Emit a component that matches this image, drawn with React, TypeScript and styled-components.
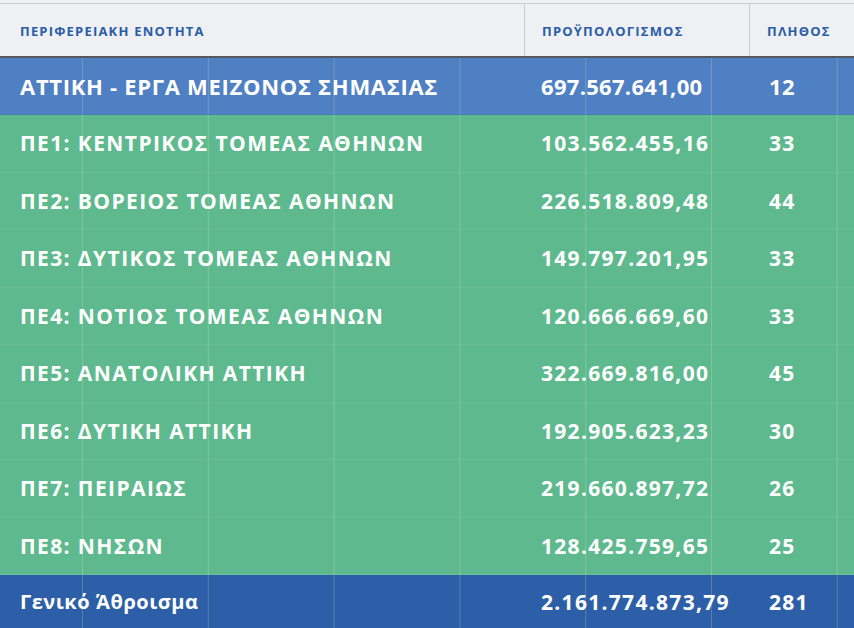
import React from "react";
import styled, { createGlobalStyle, css } from "styled-components";

const rows = [
  { name: "ΠΕ1: ΚΕΝΤΡΙΚΟΣ ΤΟΜΕΑΣ ΑΘΗΝΩΝ", budget: "103.562.455,16", count: "33" },
  { name: "ΠΕ2: ΒΟΡΕΙΟΣ ΤΟΜΕΑΣ ΑΘΗΝΩΝ", budget: "226.518.809,48", count: "44" },
  { name: "ΠΕ3: ΔΥΤΙΚΟΣ ΤΟΜΕΑΣ ΑΘΗΝΩΝ", budget: "149.797.201,95", count: "33" },
  { name: "ΠΕ4: ΝΟΤΙΟΣ ΤΟΜΕΑΣ ΑΘΗΝΩΝ", budget: "120.666.669,60", count: "33" },
  { name: "ΠΕ5: ΑΝΑΤΟΛΙΚΗ ΑΤΤΙΚΗ", budget: "322.669.816,00", count: "45" },
  { name: "ΠΕ6: ΔΥΤΙΚΗ ΑΤΤΙΚΗ", budget: "192.905.623,23", count: "30" },
  { name: "ΠΕ7: ΠΕΙΡΑΙΩΣ", budget: "219.660.897,72", count: "26" },
  { name: "ΠΕ8: ΝΗΣΩΝ", budget: "128.425.759,65", count: "25" },
];

const App = () => {
  return (
    <>
      <GlobalStyle />
      <Table>
        <HeaderRow>
          <HeadCell>ΠΕΡΙΦΕΡΕΙΑΚΗ ΕΝΟΤΗΤΑ</HeadCell>
          <HeadCell $divider>ΠΡΟΫΠΟΛΟΓΙΣΜΟΣ</HeadCell>
          <HeadCell $divider>ΠΛΗΘΟΣ</HeadCell>
        </HeaderRow>
        <Row $kind="lead">
          <Cell $variant="lead">ΑΤΤΙΚΗ - ΕΡΓΑ ΜΕΙΖΟΝΟΣ ΣΗΜΑΣΙΑΣ</Cell>
          <Cell $variant="leadNum" $num>697.567.641,00</Cell>
          <Cell $variant="leadNum">12</Cell>
        </Row>
        {rows.map((r) => (
          <Row key={r.name} $kind="body">
            <Cell $variant="name">{r.name}</Cell>
            <Cell $variant="num" $num>{r.budget}</Cell>
            <Cell $variant="num">{r.count}</Cell>
          </Row>
        ))}
        <Row $kind="total">
          <Cell $variant="mixed">Γενικό Άθροισμα</Cell>
          <Cell $variant="num" $num>2.161.774.873,79</Cell>
          <Cell $variant="num">281</Cell>
        </Row>
      </Table>
    </>
  );
};

export default App;

const GlobalStyle = createGlobalStyle`
  html, body {
    margin: 0;
    padding: 0;
    background: #eef0f3;
  }
  body {
    font-family: "Open Sans", "Noto Sans", sans-serif;
  }
`;

const scanLines = `linear-gradient(90deg, rgba(235, 245, 190, 0.22) 0 1px, transparent 1px 100%)`;

const Table = styled.div`
  width: 854px;
  height: 628px;
  display: flex;
  flex-direction: column;
  overflow: hidden;
`;

const HeaderRow = styled.div`
  display: grid;
  grid-template-columns: 524px 225px 1fr;
  height: 52px;
  margin-top: 3px;
  border-top: 1px solid #c9ccd0;
  border-bottom: 2px solid #55585c;
  background: #eef0f3;
`;

const HeadCell = styled.div<{ $divider?: boolean }>`
  display: flex;
  align-items: center;
  padding-left: ${(p) => (p.$divider ? "17px" : "20px")};
  padding-top: 2px;
  font-size: 13px;
  font-weight: 700;
  color: #2b5ca6;
  letter-spacing: 1.2px;
  border-left: ${(p) => (p.$divider ? "1px solid #c6ccd3" : "none")};
`;

const kinds = {
  lead: css`
    height: 57px;
    background-color: #4f80c3;
    border-bottom: 1px solid #4a7bbd;
  `,
  body: css`
    height: 57.5px;
    background-color: #5eba8e;
    border-bottom: 1px solid rgba(255, 255, 255, 0.07);
  `,
  total: css`
    flex: 1;
    background-color: #2d5fa8;
  `,
};

const Row = styled.div<{ $kind: keyof typeof kinds }>`
  display: grid;
  grid-template-columns: 524px 225px 1fr;
  box-sizing: border-box;
  background-image: ${scanLines};
  background-size: 125.8px 100%;
  background-position: 82px 0;
  ${(p) => kinds[p.$kind]}
`;

const variants = {
  lead: css`
    font-size: 22px;
    letter-spacing: 0.7px;
  `,
  leadNum: css`
    font-size: 22px;
    letter-spacing: 0.3px;
  `,
  name: css`
    font-size: 21px;
    letter-spacing: 1.4px;
  `,
  num: css`
    font-size: 21px;
    letter-spacing: 1.3px;
  `,
  mixed: css`
    font-size: 20px;
    letter-spacing: 0.5px;
  `,
};

const Cell = styled.div<{ $variant: keyof typeof variants; $num?: boolean }>`
  display: flex;
  align-items: center;
  color: #ffffff;
  font-weight: 700;
  padding-left: ${(p) => (p.$num ? "17px" : "20px")};
  white-space: nowrap;
  ${(p) => variants[p.$variant]}
`;
